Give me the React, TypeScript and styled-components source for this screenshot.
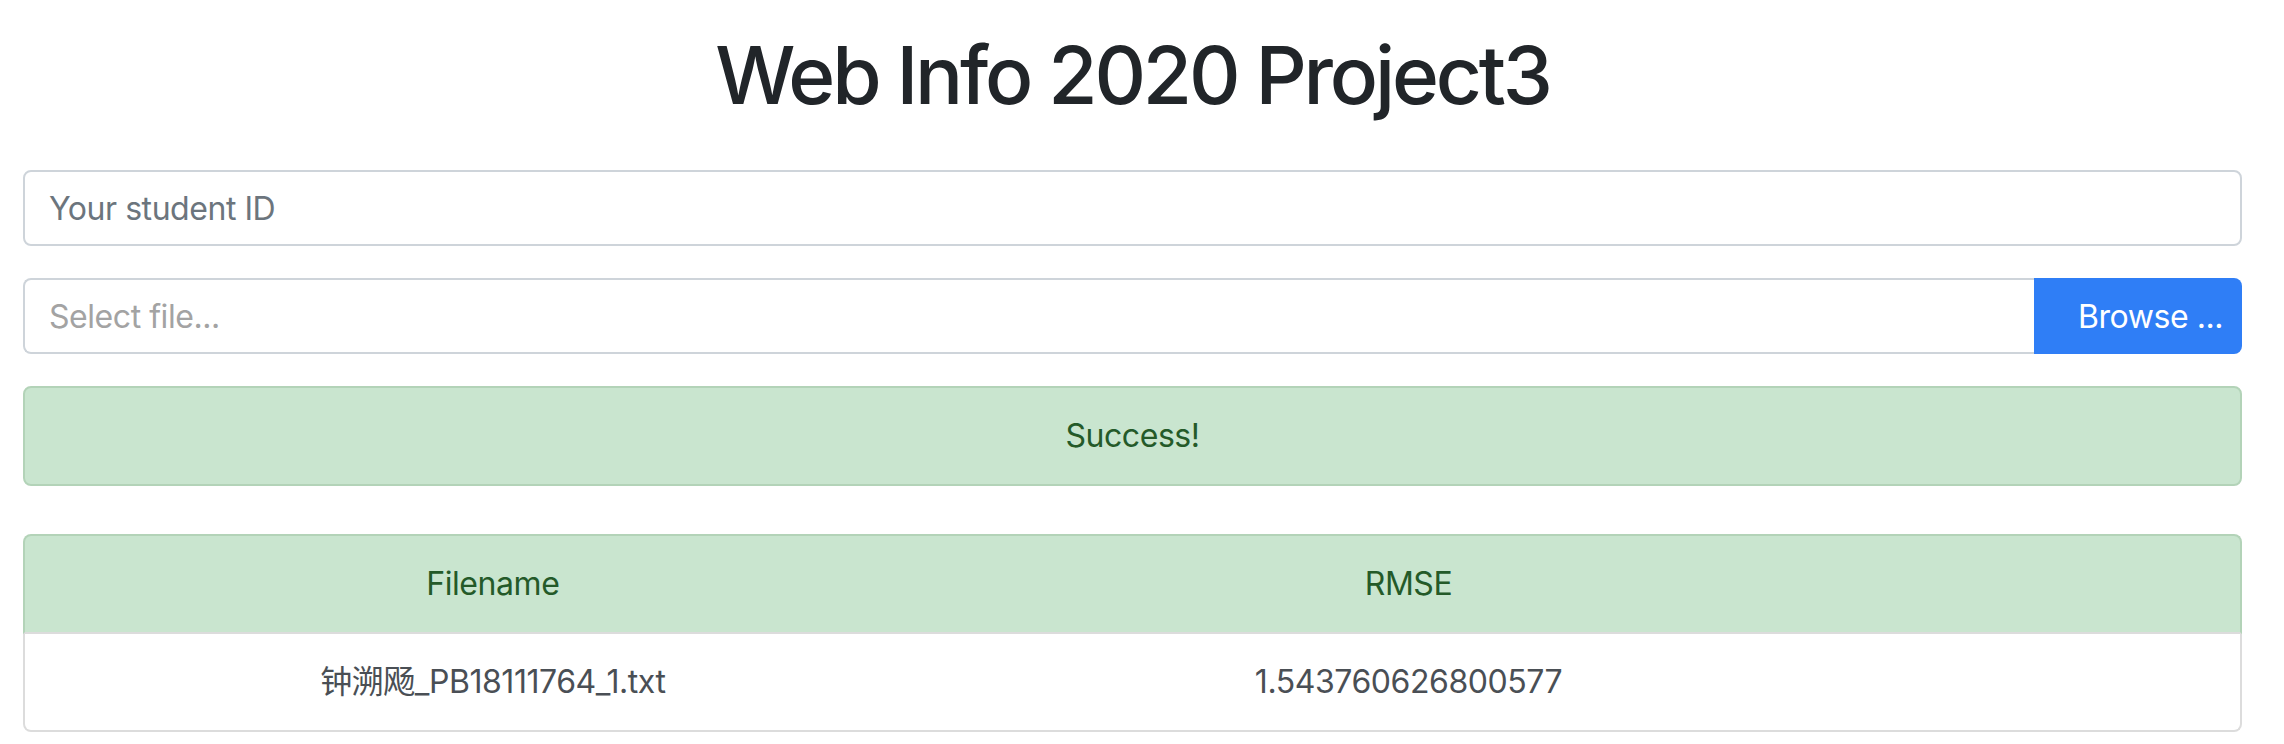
import React from "react";
import styled, { createGlobalStyle } from "styled-components";

const GlobalStyle = createGlobalStyle`
  html, body {
    margin: 0;
    padding: 0;
    background: #ffffff;
  }
  body {
    font-family: Inter, "Noto Sans CJK SC", sans-serif;
    color: #212529;
    letter-spacing: -0.45px;
  }
  * { box-sizing: border-box; }
`;

const Page = styled.main`
  padding: 27px 42px 0 23px;
`;

const Title = styled.h1`
  margin: 0 0 47px;
  font-size: 80px;
  line-height: 96px;
  font-weight: 500;
  text-align: center;
  color: #212529;
  letter-spacing: -3.2px;
`;

const TextField = styled.input`
  display: block;
  width: 100%;
  height: 76px;
  margin: 0 0 32px;
  padding: 0 24px;
  border: 2px solid #ced4da;
  border-radius: 8px;
  font-family: inherit;
  font-size: 32px;
  letter-spacing: inherit;
  color: #495057;
  background: #fff;
  outline: none;
  &::placeholder {
    color: #6c757d;
  }
`;

const FileGroup = styled.div`
  display: flex;
  height: 76px;
  margin-bottom: 32px;
`;

const FileField = styled.input`
  flex: 1;
  min-width: 0;
  height: 100%;
  padding: 0 24px;
  border: 2px solid #ced4da;
  border-right: none;
  border-radius: 8px 0 0 8px;
  font-family: inherit;
  font-size: 32px;
  letter-spacing: inherit;
  background: #fff;
  outline: none;
  &::placeholder {
    color: #a3a3a3;
  }
`;

const BrowseButton = styled.button`
  width: 208px;
  height: 100%;
  padding: 0 27px 0 44px;
  border: none;
  border-radius: 0 8px 8px 0;
  background: #2f7ef6;
  color: #ffffff;
  font-family: inherit;
  font-size: 32px;
  letter-spacing: inherit;
  text-align: left;
  white-space: nowrap;
  cursor: pointer;
`;

const Alert = styled.div`
  height: 100px;
  margin-bottom: 48px;
  padding: 24px 40px;
  border: 2px solid #b3d3b8;
  border-radius: 8px;
  background: #c9e5cf;
  color: #245a29;
  font-size: 32px;
  line-height: 48px;
  text-align: center;
`;

const Table = styled.div`
  display: grid;
  grid-template-columns: 936fr 894fr 385fr;
`;

const Row = styled.div<{ $head?: boolean }>`
  display: grid;
  grid-column: 1 / -1;
  grid-template-columns: subgrid;
  border: 2px solid ${(p) => (p.$head ? "#b3d3b8" : "#dcdcdc")};
  border-top: ${(p) => (p.$head ? "2px solid #b3d3b8" : "none")};
  border-bottom: 2px solid #dcdcdc;
  border-radius: ${(p) => (p.$head ? "8px 8px 0 0" : "0 0 8px 8px")};
  background: ${(p) => (p.$head ? "#c9e5cf" : "#ffffff")};
  color: ${(p) => (p.$head ? "#245a29" : "#4a4f55")};
`;

const Cell = styled.div`
  padding: 24px 12px;
  font-size: 32px;
  line-height: 48px;
  text-align: center;
  white-space: nowrap;
`;

export default function App() {
  return (
    <>
      <GlobalStyle />
      <Page>
        <Title>Web Info 2020 Project3</Title>
        <TextField placeholder="Your student ID" />
        <FileGroup>
          <FileField placeholder="Select file..." readOnly />
          <BrowseButton>Browse ...</BrowseButton>
        </FileGroup>
        <Alert>Success!</Alert>
        <Table>
          <Row $head>
            <Cell>Filename</Cell>
            <Cell>RMSE</Cell>
            <Cell />
          </Row>
          <Row>
            <Cell>钟溯飏_PB18111764_1.txt</Cell>
            <Cell>1.543760626800577</Cell>
            <Cell />
          </Row>
        </Table>
      </Page>
    </>
  );
}
